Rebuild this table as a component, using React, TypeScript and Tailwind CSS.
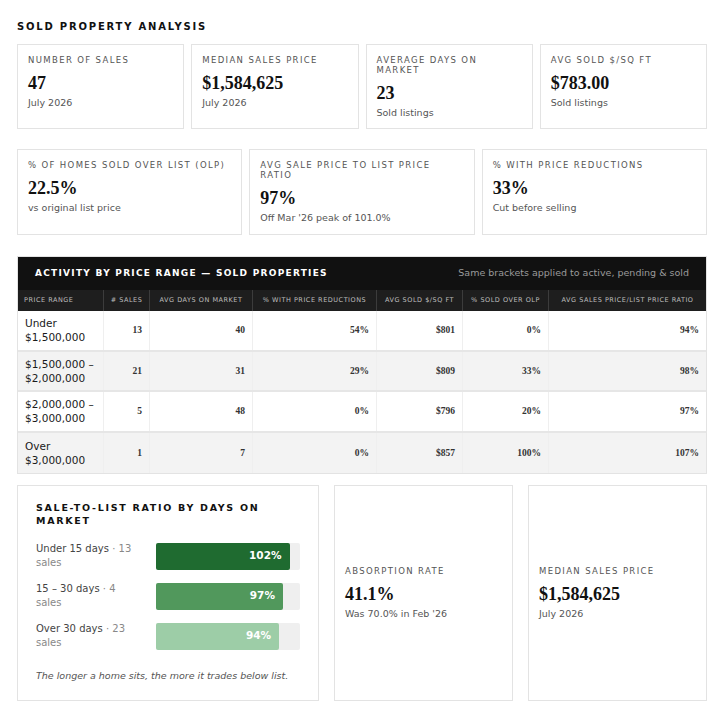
const sans = { fontFamily: '"DejaVu Sans", "Open Sans", sans-serif' };
const serif = { fontFamily: '"Liberation Serif", "DejaVu Serif", serif' };

type Stat = { label: string; value: string; sub: string };

const topStats: Stat[] = [
  { label: "Number of sales", value: "47", sub: "July 2026" },
  { label: "Median sales price", value: "$1,584,625", sub: "July 2026" },
  { label: "Average days on market", value: "23", sub: "Sold listings" },
  { label: "Avg sold $/sq ft", value: "$783.00", sub: "Sold listings" },
];

const midStats: Stat[] = [
  { label: "% of homes sold over list (OLP)", value: "22.5%", sub: "vs original list price" },
  { label: "Avg sale price to list price ratio", value: "97%", sub: "Off Mar '26 peak of 101.0%" },
  { label: "% with price reductions", value: "33%", sub: "Cut before selling" },
];

const columns = [
  { name: "Price range", w: "w-[86px]", align: "text-left" },
  { name: "# Sales", w: "w-[46px]", align: "text-center" },
  { name: "Avg days on market", w: "w-[103px]", align: "text-center" },
  { name: "% with price reductions", w: "w-[124px]", align: "text-center" },
  { name: "Avg sold $/sq ft", w: "w-[86px]", align: "text-center" },
  { name: "% sold over OLP", w: "w-[86px]", align: "text-center" },
  { name: "Avg sales price/list price ratio", w: "", align: "text-center" },
];

const rows = [
  { range: ["Under", "$1,500,000"], vals: ["13", "40", "54%", "$801", "0%", "94%"] },
  { range: ["$1,500,000 –", "$2,000,000"], vals: ["21", "31", "29%", "$809", "33%", "98%"] },
  { range: ["$2,000,000 –", "$3,000,000"], vals: ["5", "48", "0%", "$796", "20%", "97%"] },
  { range: ["Over", "$3,000,000"], vals: ["1", "7", "0%", "$857", "100%", "107%"] },
];

const bars = [
  { label: "Under 15 days", count: "· 13", value: 102, color: "bg-[#1f6b30]" },
  { label: "15 – 30 days", count: "· 4", value: 97, color: "bg-[#51985c]" },
  { label: "Over 30 days", count: "· 23", value: 94, color: "bg-[#9dcda7]" },
];

const StatBody = ({ stat }: { stat: Stat }) => (
  <>
    <div className="text-[8.5px] leading-[10px] uppercase tracking-[0.16em] text-[#555]">{stat.label}</div>
    <div className="mt-[5px] text-[18px] leading-[26px] font-bold text-[#111]" style={serif}>
      {stat.value}
    </div>
    <div className="text-[9.5px] leading-[14px] text-[#555]">{stat.sub}</div>
  </>
);

const StatCard = ({ stat, className = "" }: { stat: Stat; className?: string }) => (
  <div className={`border border-[#e3e3e3] bg-white px-[10px] pt-[10px] ${className}`}>
    <StatBody stat={stat} />
  </div>
);

const CenterCard = ({ stat }: { stat: Stat }) => (
  <div className="flex flex-col justify-center border border-[#e3e3e3] bg-white px-[10px]">
    <StatBody stat={stat} />
  </div>
);

export default function App() {
  return (
    <div className="min-h-screen bg-white px-[17px] pt-[21px] pb-[12px]" style={sans}>
      <h2 className="text-[10px] leading-[12px] font-bold uppercase tracking-[0.18em] text-[#111]">
        Sold property analysis
      </h2>

      <div className="mt-[11px] grid grid-cols-4 gap-[7px]">
        {topStats.map((s) => (
          <StatCard key={s.label} stat={s} className="h-[85px]" />
        ))}
      </div>

      <div className="mt-[20px] grid grid-cols-3 gap-[7px]">
        {midStats.map((s) => (
          <StatCard key={s.label} stat={s} className="h-[86px]" />
        ))}
      </div>

      <div className="mt-[21px] border border-[#e3e3e3]">
        <div className="flex h-[33px] items-center justify-between bg-[#111111] px-[17px]">
          <div className="text-[9px] font-bold uppercase tracking-[0.14em] text-white">
            Activity by price range — sold properties
          </div>
          <div className="text-[9.5px] text-[#9a9a9a]">Same brackets applied to active, pending &amp; sold</div>
        </div>
        <div className="flex h-[21px] bg-[#1e1e1e]">
          {columns.map((c, i) => (
            <div
              key={c.name}
              className={`flex items-center whitespace-nowrap px-[6px] text-[6.5px] uppercase tracking-[0.08em] text-[#bdbdbd] ${c.w} ${
                i === columns.length - 1 ? "flex-1" : "shrink-0 border-r border-[#3c3c3c]"
              } ${c.align === "text-left" ? "justify-start" : "justify-center"}`}
            >
              {c.name}
            </div>
          ))}
        </div>
        {rows.map((r, ri) => (
          <div
            key={r.range.join()}
            className={`flex h-[40.5px] ${ri % 2 === 1 ? "bg-[#f3f3f3]" : "bg-white"} ${
              ri < rows.length - 1 ? "border-b-2 border-[#e6e6e6]" : ""
            }`}
          >
            <div className="flex w-[86px] shrink-0 flex-col justify-center border-r border-[#efefef] px-[7px] text-[10.5px] leading-[14px] font-medium text-[#1a1a1a]">
              <span>{r.range[0]}</span>
              <span>{r.range[1]}</span>
            </div>
            {r.vals.map((v, vi) => (
              <div
                key={vi}
                className={`flex items-center justify-end px-[7px] text-[9.5px] font-bold text-[#333] ${
                  columns[vi + 1].w
                } ${vi === r.vals.length - 1 ? "flex-1" : "shrink-0 border-r border-[#efefef]"}`}
                style={serif}
              >
                {v}
              </div>
            ))}
          </div>
        ))}
      </div>

      <div className="mt-[11px] grid h-[216px] grid-cols-[302px_1fr_1fr] gap-[15px]">
        <div className="border border-[#e3e3e3] bg-white px-[18px] pt-[15px]">
          <div className="text-[9.5px] leading-[13px] font-bold uppercase tracking-[0.18em] text-[#111]">
            Sale-to-list ratio by days on market
          </div>
          <div className="mt-[15px] flex flex-col gap-[12px]">
            {bars.map((b) => (
              <div key={b.label} className="flex items-center gap-[6px]">
                <div className="w-[114px] shrink-0 text-[10px] leading-[14px] text-[#444]">
                  {b.label} <span className="text-[#888]">{b.count}</span>
                  <br />
                  <span className="text-[#888]">sales</span>
                </div>
                <div className="h-[27px] flex-1 rounded-[2px] bg-[#efefef]">
                  <div
                    className={`flex h-full items-center justify-end rounded-[2px] pr-[8px] text-[10.5px] font-bold text-white ${b.color}`}
                    style={{ width: `${(b.value / 110) * 100}%` }}
                  >
                    {b.value}%
                  </div>
                </div>
              </div>
            ))}
          </div>
          <div className="mt-[19px] text-[9.5px] italic text-[#555]">
            The longer a home sits, the more it trades below list.
          </div>
        </div>
        <CenterCard stat={{ label: "Absorption rate", value: "41.1%", sub: "Was 70.0% in Feb '26" }} />
        <CenterCard stat={{ label: "Median sales price", value: "$1,584,625", sub: "July 2026" }} />
      </div>
    </div>
  );
}
